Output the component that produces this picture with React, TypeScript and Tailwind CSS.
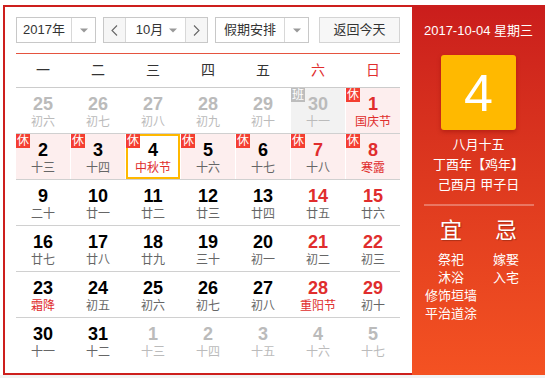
import React from "react";

type Day = {
  n: number;
  lunar: string;
  out?: boolean;
  red?: boolean;
  fest?: boolean;
  tag?: "休" | "班";
  sel?: boolean;
};

const weeks: Day[][] = [
  [
    { n: 25, lunar: "初六", out: true },
    { n: 26, lunar: "初七", out: true },
    { n: 27, lunar: "初八", out: true },
    { n: 28, lunar: "初九", out: true },
    { n: 29, lunar: "初十", out: true },
    { n: 30, lunar: "十一", out: true, tag: "班" },
    { n: 1, lunar: "国庆节", red: true, fest: true, tag: "休" },
  ],
  [
    { n: 2, lunar: "十三", tag: "休" },
    { n: 3, lunar: "十四", tag: "休" },
    { n: 4, lunar: "中秋节", fest: true, tag: "休", sel: true },
    { n: 5, lunar: "十六", tag: "休" },
    { n: 6, lunar: "十七", tag: "休" },
    { n: 7, lunar: "十八", red: true, tag: "休" },
    { n: 8, lunar: "寒露", red: true, fest: true, tag: "休" },
  ],
  [
    { n: 9, lunar: "二十" },
    { n: 10, lunar: "廿一" },
    { n: 11, lunar: "廿二" },
    { n: 12, lunar: "廿三" },
    { n: 13, lunar: "廿四" },
    { n: 14, lunar: "廿五", red: true },
    { n: 15, lunar: "廿六", red: true },
  ],
  [
    { n: 16, lunar: "廿七" },
    { n: 17, lunar: "廿八" },
    { n: 18, lunar: "廿九" },
    { n: 19, lunar: "三十" },
    { n: 20, lunar: "初一" },
    { n: 21, lunar: "初二", red: true },
    { n: 22, lunar: "初三", red: true },
  ],
  [
    { n: 23, lunar: "霜降", fest: true },
    { n: 24, lunar: "初五" },
    { n: 25, lunar: "初六" },
    { n: 26, lunar: "初七" },
    { n: 27, lunar: "初八" },
    { n: 28, lunar: "重阳节", red: true, fest: true },
    { n: 29, lunar: "初十", red: true },
  ],
  [
    { n: 30, lunar: "十一" },
    { n: 31, lunar: "十二" },
    { n: 1, lunar: "十三", out: true },
    { n: 2, lunar: "十四", out: true },
    { n: 3, lunar: "十五", out: true },
    { n: 4, lunar: "十六", out: true },
    { n: 5, lunar: "十七", out: true },
  ],
];

const weekdays = ["一", "二", "三", "四", "五", "六", "日"];

const font = { fontFamily: '"Liberation Sans", Arial, "Noto Sans CJK SC", sans-serif' };

function Caret() {
  return (
    <svg width="8" height="5" viewBox="0 0 8 5" className="shrink-0">
      <path d="M0 0.5h8L4 4.5z" fill="#999" />
    </svg>
  );
}

function Chevron({ dir }: { dir: "l" | "r" }) {
  return (
    <svg width="7" height="11" viewBox="0 0 7 11">
      <path
        d={dir === "l" ? "M6 0.5L1 5.5l5 5" : "M1 0.5l5 5-5 5"}
        fill="none"
        stroke="#666"
        strokeWidth="1.1"
      />
    </svg>
  );
}

function Cell({ d }: { d: Day }) {
  let bg = "bg-white";
  if (d.tag === "班") bg = "bg-[#f2f2f2]";
  else if (d.tag === "休" && !d.sel) bg = "bg-[#fdeeee]";

  const numColor = d.out ? "text-[#bbbbbb]" : d.red ? "text-[#e02d2d]" : "text-black";
  const lunarColor = d.out
    ? "text-[#bbbbbb]"
    : d.fest
    ? "text-[#e02d2d]"
    : "text-[#666666]";

  return (
    <div className={`relative h-[45px] pt-[6px] text-center ${bg}`}>
      {d.sel && <div className="absolute inset-0 border-2 border-[#ffb800]"></div>}
      {d.tag && (
        <span
          className={`absolute left-0 top-0 z-10 flex h-[14px] w-[14px] items-center justify-center text-[12px] leading-none text-white ${
            d.tag === "休" ? "bg-[#f43e31]" : "bg-[#bdbdbd]"
          }`}
        >
          {d.tag}
        </span>
      )}
      <div className={`text-[18px] leading-[20px] font-bold ${numColor}`}>{d.n}</div>
      <div className={`text-[12px] leading-[16px] ${lunarColor}`}>{d.lunar}</div>
    </div>
  );
}

export default function App() {
  return (
    <div className="flex h-[378px] w-[545px] flex-col bg-white" style={font}>
      <div className="flex h-[375px] pl-[3px] pt-[5px]">
        <div className="w-[409px] border-b-2 border-l-2 border-t-2 border-[#cd1f1d] pl-[11px] pr-[12px] pt-[10px]">
          {/* toolbar */}
          <div className="flex h-[26px] text-[13px] text-[#333]">
            <div className="flex w-[80px] border border-[#c8c8c8]">
              <div className="flex w-[55px] items-center justify-center border-r border-[#d8d8d8]">2017年</div>
              <div className="flex flex-1 items-center justify-center">
                <Caret />
              </div>
            </div>
            <div className="ml-[7px] flex w-[105px] border border-[#c8c8c8]">
              <div className="flex w-[22px] items-center justify-center border-r border-[#d8d8d8] bg-[#f6f6f6]">
                <Chevron dir="l" />
              </div>
              <div className="flex flex-1 items-center justify-center gap-[6px] pl-[2px]">
                <span>10月</span>
                <Caret />
              </div>
              <div className="flex w-[22px] items-center justify-center border-l border-[#d8d8d8] bg-[#f6f6f6]">
                <Chevron dir="r" />
              </div>
            </div>
            <div className="ml-[7px] flex w-[94px] border border-[#c8c8c8]">
              <div className="flex w-[69px] items-center justify-center border-r border-[#d8d8d8]">假期安排</div>
              <div className="flex flex-1 items-center justify-center">
                <Caret />
              </div>
            </div>
            <div className="ml-[10px] flex w-[81px] items-center justify-center border border-[#d4d4d4] bg-[#f7f7f7]">
              返回今天
            </div>
          </div>

          <div className="mt-[10px] h-px bg-[#e5533f]"></div>

          {/* weekday header */}
          <div className="grid h-[34px] grid-cols-7 gap-x-px border-b border-[#cccccc] text-[14px]">
            {weekdays.map((w, i) => (
              <div
                key={w}
                className={`flex items-center justify-center ${i >= 5 ? "text-[#e02d2d]" : "text-[#333]"}`}
              >
                {w}
              </div>
            ))}
          </div>

          {weeks.map((row, ri) => (
            <div
              key={ri}
              className={`grid grid-cols-7 gap-x-px ${ri < weeks.length - 1 ? "border-b border-[#d0d0d0]" : ""}`}
            >
              {row.map((d, ci) => (
                <Cell key={ci} d={d} />
              ))}
            </div>
          ))}
        </div>

        {/* right panel */}
        <div className="flex w-[133px] flex-col items-center bg-gradient-to-b from-[#ca1d1c] to-[#f45222] pt-[17px] text-white">
          <div className="text-[13px] leading-[18px]">2017-10-04 星期三</div>
          <div className="mt-[15px] flex h-[75px] w-[75px] items-center justify-center rounded-[3px] bg-[#ffb900] shadow-[0_2px_4px_rgba(120,0,0,0.35)]">
            <span className="text-[52px] leading-none">4</span>
          </div>
          <div className="mt-[5px] text-center text-[13px] leading-[20px]">
            <div>八月十五</div>
            <div>丁酉年【鸡年】</div>
            <div>己酉月 甲子日</div>
          </div>
          <div className="mt-[9px] h-[2px] w-[110px] bg-white/30"></div>
          <div className="mt-[13px] flex">
            <div className="flex w-[55px] flex-col items-center">
              <div className="text-[22px] leading-[24px] [text-shadow:1px_1px_1px_rgba(0,0,0,0.25)]">宜</div>
              <div className="mt-[8px] whitespace-nowrap text-center text-[13px] leading-[18px]">
                <div>祭祀</div>
                <div>沐浴</div>
                <div>修饰垣墙</div>
                <div>平治道涂</div>
              </div>
            </div>
            <div className="flex w-[55px] flex-col items-center">
              <div className="text-[22px] leading-[24px] [text-shadow:1px_1px_1px_rgba(0,0,0,0.25)]">忌</div>
              <div className="mt-[8px] whitespace-nowrap text-center text-[13px] leading-[18px]">
                <div>嫁娶</div>
                <div>入宅</div>
              </div>
            </div>
          </div>
        </div>
      </div>
      <div className="flex-1 bg-[#f2f2f2]"></div>
    </div>
  );
}
